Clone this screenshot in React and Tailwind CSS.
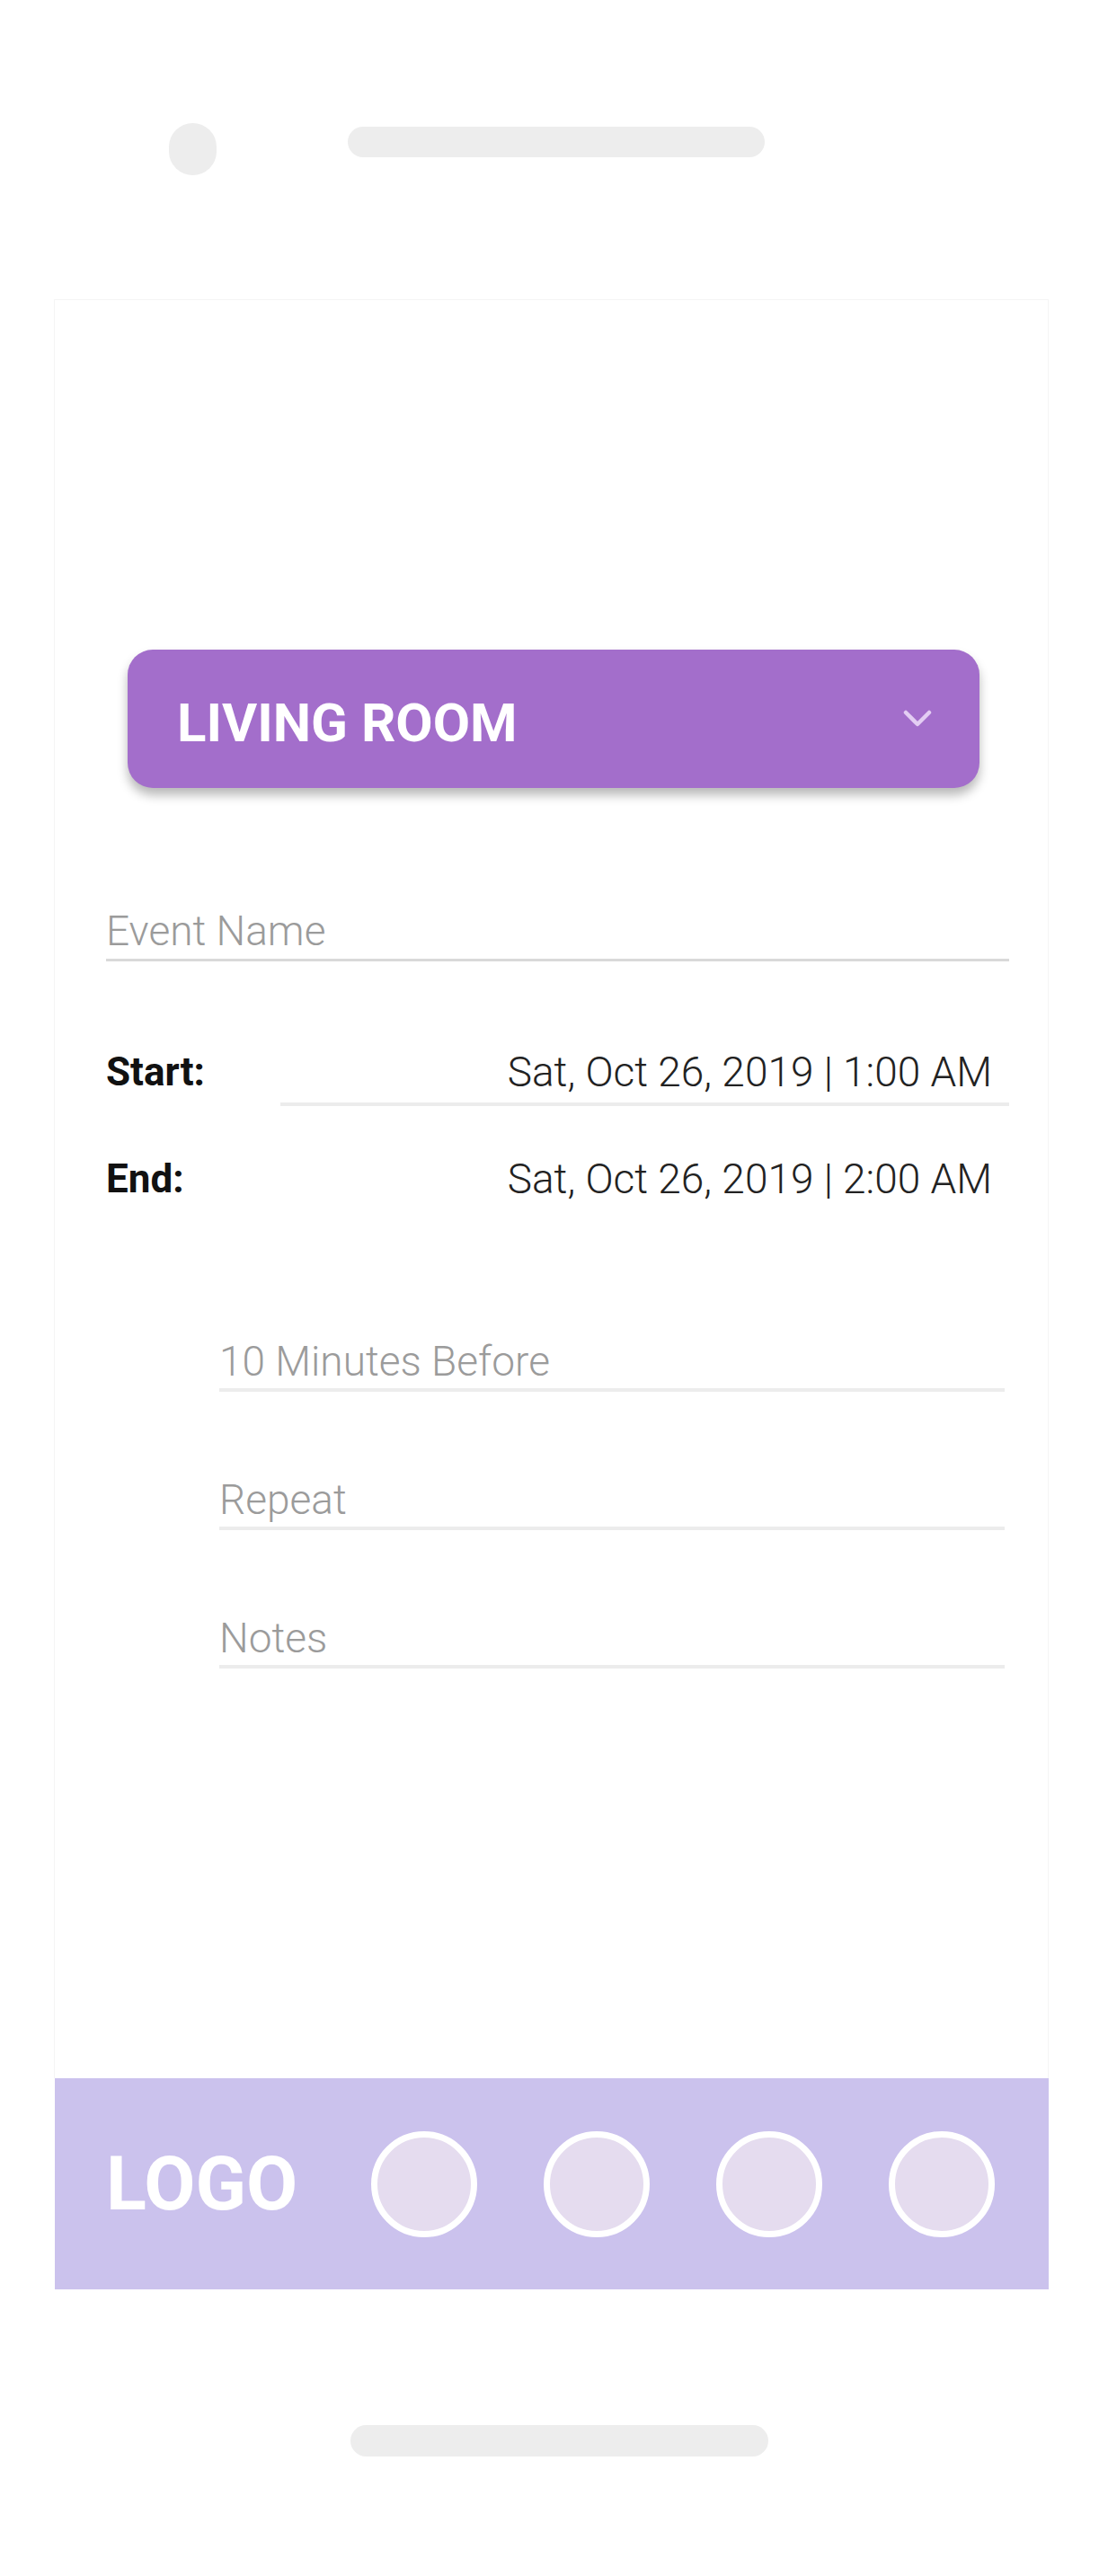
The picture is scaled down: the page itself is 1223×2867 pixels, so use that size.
import React from "react";

function Field({ label, className = "" }) {
  return (
    <div className={`border-b-4 border-[#ececec] pb-[4px] ${className}`}>
      <span className="block text-[46px] leading-[52px] font-light text-[#9b9b9b]">
        {label}
      </span>
    </div>
  );
}

export default function App() {
  const tabs = [1, 2, 3, 4];

  return (
    <div className="w-[1223px] h-[2867px] bg-white flex flex-col font-['Roboto',sans-serif]">
      {/* status bar */}
      <div className="h-[333px] flex items-start pt-[137px] pl-[188px]">
        <div className="w-[53px] h-[58px] rounded-full bg-[#ededed]" />
        <div className="ml-[146px] mt-[4px] w-[464px] h-[34px] rounded-full bg-[#ededed]" />
      </div>

      {/* screen */}
      <div className="ml-[60px] w-[1107px] h-[1980px] border border-b-0 border-[#f5f5f5] flex flex-col">
        <button className="mt-[389px] ml-[81px] w-[948px] h-[154px] rounded-[28px] bg-[#a36ecb] shadow-[0_8px_12px_rgba(0,0,0,0.28)] flex items-center justify-between pl-[55px] pr-[53px] pt-[10px]">
          <span className="text-[60px] leading-none font-bold text-white">LIVING ROOM</span>
          <svg width="32" height="20" viewBox="0 0 32 20" className="-mt-[10px]">
            <path
              d="M3 3 L16 16 L29 3"
              fill="none"
              stroke="#e3cdf3"
              strokeWidth="4.5"
              strokeLinecap="round"
              strokeLinejoin="round"
            />
          </svg>
        </button>

        {/* event name */}
        <div className="mt-[133px] ml-[57px] w-[1005px] border-b-[3px] border-[#d9d9d9] pb-[5px]">
          <span className="block text-[46px] leading-[52px] font-light text-[#9b9b9b]">
            Event Name
          </span>
        </div>

        {/* start */}
        <div className="mt-[97px] ml-[57px] w-[1005px] flex items-start">
          <span className="w-[194px] text-[44px] leading-[52px] font-bold text-[#111]">Start:</span>
          <div className="flex-1 border-b-4 border-[#ececec] pb-[8px] pr-[19px] text-right">
            <span className="text-[46px] leading-[52px] font-light text-[#222]">
              Sat, Oct 26, 2019 | 1:00 AM
            </span>
          </div>
        </div>

        {/* end */}
        <div className="mt-[55px] ml-[57px] w-[1005px] flex items-start">
          <span className="w-[194px] text-[44px] leading-[52px] font-bold text-[#111]">End:</span>
          <div className="flex-1 pr-[19px] text-right">
            <span className="text-[46px] leading-[52px] font-light text-[#222]">
              Sat, Oct 26, 2019 | 2:00 AM
            </span>
          </div>
        </div>

        <Field label="10 Minutes Before" className="mt-[151px] ml-[183px] w-[874px]" />
        <Field label="Repeat" className="mt-[94px] ml-[183px] w-[874px]" />
        <Field label="Notes" className="mt-[94px] ml-[183px] w-[874px]" />
      </div>

      {/* bottom nav */}
      <div className="ml-[61px] w-[1106px] h-[235px] bg-[#cbc2ed] flex items-center pl-[57px]">
        <span className="text-[83px] leading-none font-bold text-white mr-[82px]">LOGO</span>
        <div className="flex gap-[74px]">
          {tabs.map((t) => (
            <div
              key={t}
              className="w-[118px] h-[118px] rounded-full border-[7px] border-white bg-[#e5dcef]"
            />
          ))}
        </div>
      </div>

      {/* home indicator */}
      <div className="mt-[151px] ml-[390px] w-[465px] h-[35px] rounded-full bg-[#ededed]" />
    </div>
  );
}
